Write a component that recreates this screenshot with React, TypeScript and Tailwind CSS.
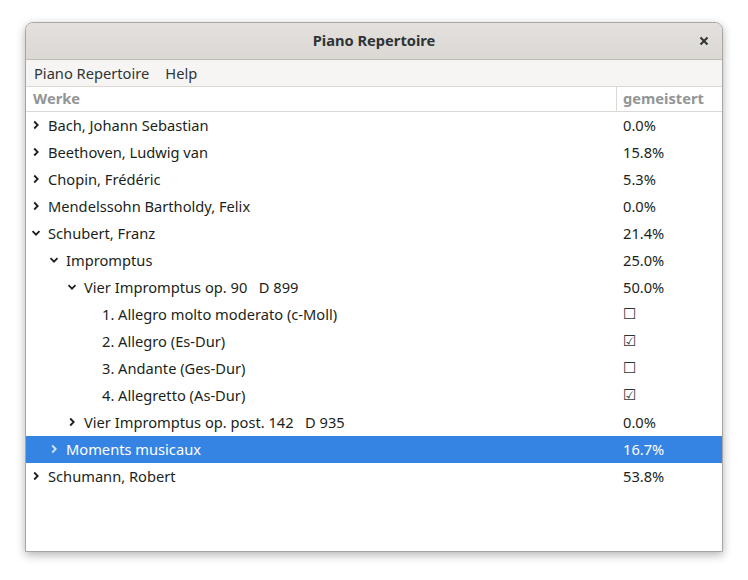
import React from "react";

type Row = { level: number; label: string; value: string; exp?: "open" | "closed" | "none"; sel?: boolean; check?: boolean };

const rows: Row[] = [
  { level: 0, label: "Bach, Johann Sebastian", value: "0.0%", exp: "closed" },
  { level: 0, label: "Beethoven, Ludwig van", value: "15.8%", exp: "closed" },
  { level: 0, label: "Chopin, Frédéric", value: "5.3%", exp: "closed" },
  { level: 0, label: "Mendelssohn Bartholdy, Felix", value: "0.0%", exp: "closed" },
  { level: 0, label: "Schubert, Franz", value: "21.4%", exp: "open" },
  { level: 1, label: "Impromptus", value: "25.0%", exp: "open" },
  { level: 2, label: "Vier Impromptus op. 90   D 899", value: "50.0%", exp: "open" },
  { level: 3, label: "1. Allegro molto moderato (c-Moll)", value: "\u2610", exp: "none", check: true },
  { level: 3, label: "2. Allegro (Es-Dur)", value: "\u2611", exp: "none", check: true },
  { level: 3, label: "3. Andante (Ges-Dur)", value: "\u2610", exp: "none", check: true },
  { level: 3, label: "4. Allegretto (As-Dur)", value: "\u2611", exp: "none", check: true },
  { level: 2, label: "Vier Impromptus op. post. 142   D 935", value: "0.0%", exp: "closed" },
  { level: 1, label: "Moments musicaux", value: "16.7%", exp: "closed", sel: true },
  { level: 0, label: "Schumann, Robert", value: "53.8%", exp: "closed" },
];

function Chevron({ open, color }: { open: boolean; color: string }) {
  return (
    <svg width="10" height="10" viewBox="0 0 10 10" className="shrink-0">
      {open ? (
        <path d="M1.5 3.2 L5 6.7 L8.5 3.2" fill="none" stroke={color} strokeWidth="1.8" />
      ) : (
        <path d="M3.2 1.5 L6.7 5 L3.2 8.5" fill="none" stroke={color} strokeWidth="1.8" />
      )}
    </svg>
  );
}

export default function App() {
  return (
    <div className="w-[748px] h-[580px] bg-white pt-[22px] pl-[25px]" style={{ fontFamily: '"Noto Sans", "DejaVu Sans", sans-serif' }}>
      <div className="w-[698px] h-[530px] flex flex-col rounded-t-[8px] border border-[#a8a5a2] bg-white shadow-[0_3px_10px_rgba(0,0,0,0.3)] overflow-hidden">
        {/* title bar */}
        <div className="h-[37px] shrink-0 flex items-center justify-center relative bg-gradient-to-b from-[#e3e0dd] to-[#dcd8d4] border-b border-[#c0bbb6] pb-[2px]">
          <span className="text-[14.67px] font-bold text-[#2e3436]">Piano Repertoire</span>
          <svg width="10" height="10" viewBox="0 0 10 10" className="absolute right-[13px] top-[13px]">
            <path d="M1.5 1.5 L8.5 8.5 M8.5 1.5 L1.5 8.5" stroke="#2e3436" strokeWidth="2" />
          </svg>
        </div>
        {/* menu bar */}
        <div className="h-[27px] shrink-0 flex items-center bg-[#f6f5f4] border-b border-[#dcd8d4] text-[14.67px] text-[#2e3436] pb-[1px]">
          <span className="pl-[8px]">Piano Repertoire</span>
          <span className="pl-[16px]">Help</span>
        </div>
        {/* header */}
        <div className="h-[25px] shrink-0 flex border-b border-[#dcd8d4] text-[14.67px] font-bold text-[#929595]">
          <div className="w-[591px] border-r border-[#dcd8d4] pl-[7px] pb-[2px] flex items-center">Werke</div>
          <div className="flex-1 pl-[6px] pb-[2px] flex items-center">gemeistert</div>
        </div>
        {/* rows */}
        <div className="flex flex-col text-[14.67px]">
          {rows.map((r, i) => {
            const color = r.sel ? "#ffffff" : "#1c1f20";
            return (
              <div key={i} className={`h-[27px] flex items-center pb-[2px] ${r.sel ? "bg-[#3584e4] text-white" : "text-[#1c1f20]"}`}>
                <div className="w-[592px] flex items-center">
                  <div style={{ width: 5 + r.level * 18 }} className="shrink-0" />
                  <div className="w-[17px] shrink-0 flex items-center">
                    {r.exp !== "none" && <Chevron open={r.exp === "open"} color={r.sel ? "#d6e6fa" : color} />}
                  </div>
                  <span className="whitespace-pre">{r.label}</span>
                </div>
                <div className="flex-1 pl-[5px]">
                  {r.check ? (
                    <span className="text-[15px] text-[#2e3436]" style={{ fontFamily: '"DejaVu Sans", sans-serif' }}>{r.value}</span>
                  ) : (
                    <span>{r.value}</span>
                  )}
                </div>
              </div>
            );
          })}
        </div>
      </div>
    </div>
  );
}
